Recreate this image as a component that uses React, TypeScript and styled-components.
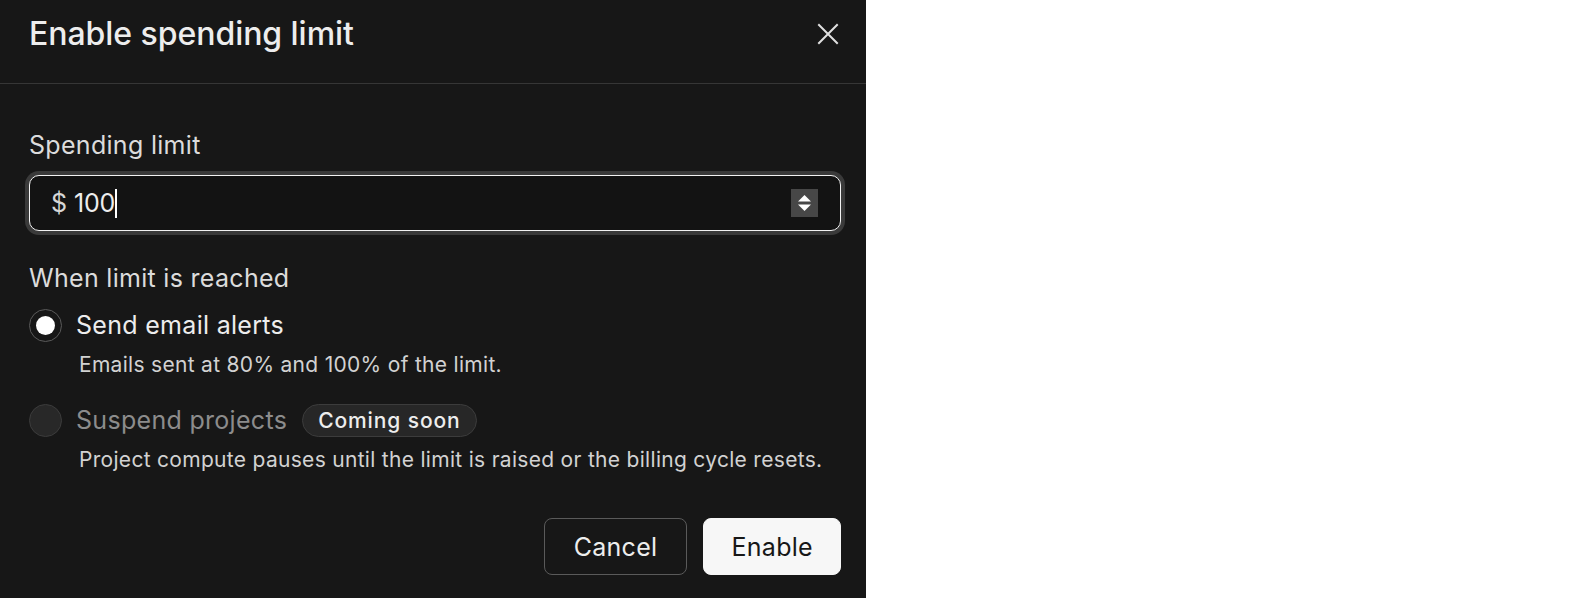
import React, { useState } from "react"
import styled, { createGlobalStyle } from "styled-components"

const GlobalStyle = createGlobalStyle`
  html, body {
    margin: 0;
    padding: 0;
    background: #ffffff;
    font-family: Inter, "Noto Sans", sans-serif;
    -webkit-font-smoothing: antialiased;
  }
`

type Action = "alerts" | "suspend"

export default function App() {
  const [action, setAction] = useState<Action>("alerts")
  const [limit] = useState("100")

  return (
    <>
      <GlobalStyle />
      <S.Panel>
        <S.Header>
          <S.Title>Enable spending limit</S.Title>
          <S.CloseButton aria-label="Close">
            <svg width="24" height="24" viewBox="0 0 24 24" fill="none" stroke="currentColor" strokeWidth="2" strokeLinecap="square">
              <path d="M3 3 L21 21 M21 3 L3 21" />
            </svg>
          </S.CloseButton>
        </S.Header>

        <S.Body>
          <S.Label>Spending limit</S.Label>
          <S.Field>
            <S.Prefix>$</S.Prefix>
            <S.Value>{limit}</S.Value>
            <S.Caret />
            <S.Spinner>
              <svg width="27" height="28" viewBox="0 0 27 28">
                <rect width="27" height="28" fill="#474747" />
                <path d="M13.5 6 L20 12.5 H7 Z" fill="#ffffff" />
                <path d="M13.5 22 L20 15.5 H7 Z" fill="#ffffff" />
              </svg>
            </S.Spinner>
          </S.Field>

          <S.SectionLabel>When limit is reached</S.SectionLabel>

          <S.Option onClick={() => setAction("alerts")}>
            <S.Radio $checked={action === "alerts"} />
            <S.OptionTitle>Send email alerts</S.OptionTitle>
          </S.Option>
          <S.OptionHint>Emails sent at 80% and 100% of the limit.</S.OptionHint>

          <S.Option $disabled $gap={25}>
            <S.Radio $disabled />
            <S.OptionTitle $disabled>Suspend projects</S.OptionTitle>
            <S.Badge>Coming soon</S.Badge>
          </S.Option>
          <S.OptionHint>Project compute pauses until the limit is raised or the billing cycle resets.</S.OptionHint>

          <S.Footer>
            <S.Button>Cancel</S.Button>
            <S.Button $primary>Enable</S.Button>
          </S.Footer>
        </S.Body>
      </S.Panel>
    </>
  )
}

const S = {
  Panel: styled.div`
    width: 866px;
    height: 100vh;
    background: #171717;
    color: #ededed;
    display: flex;
    flex-direction: column;
    box-sizing: border-box;
  `,
  Header: styled.div`
    height: 84px;
    box-sizing: border-box;
    padding: 0 29px 16px 29px;
    display: flex;
    align-items: center;
    justify-content: space-between;
    border-bottom: 1px solid #363636;
  `,
  Title: styled.h1`
    margin: 0;
    font-size: 32px;
    font-weight: 500;
    letter-spacing: -0.05px;
    color: #ededed;
  `,
  CloseButton: styled.button`
    background: none;
    border: none;
    padding: 0;
    margin-right: -3px;
    color: #e0e0e0;
    display: flex;
    cursor: pointer;
  `,
  Body: styled.div`
    flex: 1;
    display: flex;
    flex-direction: column;
    padding: 45px 25px 23px 29px;
  `,
  Label: styled.div`
    font-size: 25px;
    line-height: 32px;
    letter-spacing: 0.3px;
    color: #dcdcdc;
  `,
  Field: styled.div`
    margin-top: 14px;
    height: 56px;
    box-sizing: border-box;
    display: flex;
    align-items: center;
    padding: 0 22px 0 21px;
    border: 1.5px solid #f2f2f2;
    border-radius: 10px;
    background: #131313;
    box-shadow: 0 0 0 4px #3a3a3a;
    font-size: 25px;
    color: #ededed;
  `,
  Prefix: styled.span`
    color: #d6d6d6;
    margin-right: 7px;
  `,
  Value: styled.span`
    letter-spacing: -0.3px;
  `,
  Caret: styled.span`
    width: 2px;
    height: 29px;
    background: #ffffff;
  `,
  Spinner: styled.span`
    margin-left: auto;
    display: flex;
  `,
  SectionLabel: styled.div`
    margin-top: 31px;
    font-size: 25px;
    line-height: 32px;
    letter-spacing: 0.3px;
    color: #dcdcdc;
  `,
  Option: styled.div<{ $disabled?: boolean; $gap?: number }>`
    display: flex;
    align-items: center;
    gap: 14px;
    margin-top: ${(p) => p.$gap ?? 15}px;
    cursor: ${(p) => (p.$disabled ? "default" : "pointer")};
  `,
  Radio: styled.span<{ $checked?: boolean; $disabled?: boolean }>`
    width: 33px;
    height: 33px;
    box-sizing: border-box;
    border-radius: 50%;
    border: 1px solid ${(p) => (p.$disabled ? "#3c3c3c" : "#5a5a5a")};
    background: ${(p) => (p.$disabled ? "#282828" : "transparent")};
    display: flex;
    align-items: center;
    justify-content: center;
    flex-shrink: 0;
    &::after {
      content: "";
      display: ${(p) => (p.$checked ? "block" : "none")};
      width: 19px;
      height: 19px;
      border-radius: 50%;
      background: #ffffff;
    }
  `,
  OptionTitle: styled.span<{ $disabled?: boolean }>`
    font-size: 25px;
    line-height: 33px;
    letter-spacing: 0.3px;
    color: ${(p) => (p.$disabled ? "#8c8c8c" : "#ededed")};
  `,
  OptionHint: styled.div`
    margin-top: 9px;
    margin-left: 50px;
    font-size: 21px;
    line-height: 28px;
    letter-spacing: 0.3px;
    color: #d2d2d2;
  `,
  Badge: styled.span`
    margin-left: 1px;
    height: 33px;
    box-sizing: border-box;
    padding: 0 15px;
    display: inline-flex;
    align-items: center;
    border-radius: 999px;
    background: #272727;
    border: 1px solid #3c3c3c;
    font-size: 21px;
    font-weight: 500;
    letter-spacing: 0.9px;
    color: #ededed;
  `,
  Footer: styled.div`
    margin-top: auto;
    display: flex;
    justify-content: flex-end;
    gap: 16px;
  `,
  Button: styled.button<{ $primary?: boolean }>`
    height: 57px;
    box-sizing: border-box;
    padding: 0 ${(p) => (p.$primary ? 27 : 29)}px;
    border-radius: 8px;
    font-family: Inter, "Noto Sans", sans-serif;
    font-size: 25px;
    font-weight: 400;
    letter-spacing: 0.3px;
    cursor: pointer;
    border: 1px solid ${(p) => (p.$primary ? "#f7f7f7" : "#5a5a5a")};
    background: ${(p) => (p.$primary ? "#f7f7f7" : "transparent")};
    color: ${(p) => (p.$primary ? "#171717" : "#ededed")};
  `,
}
